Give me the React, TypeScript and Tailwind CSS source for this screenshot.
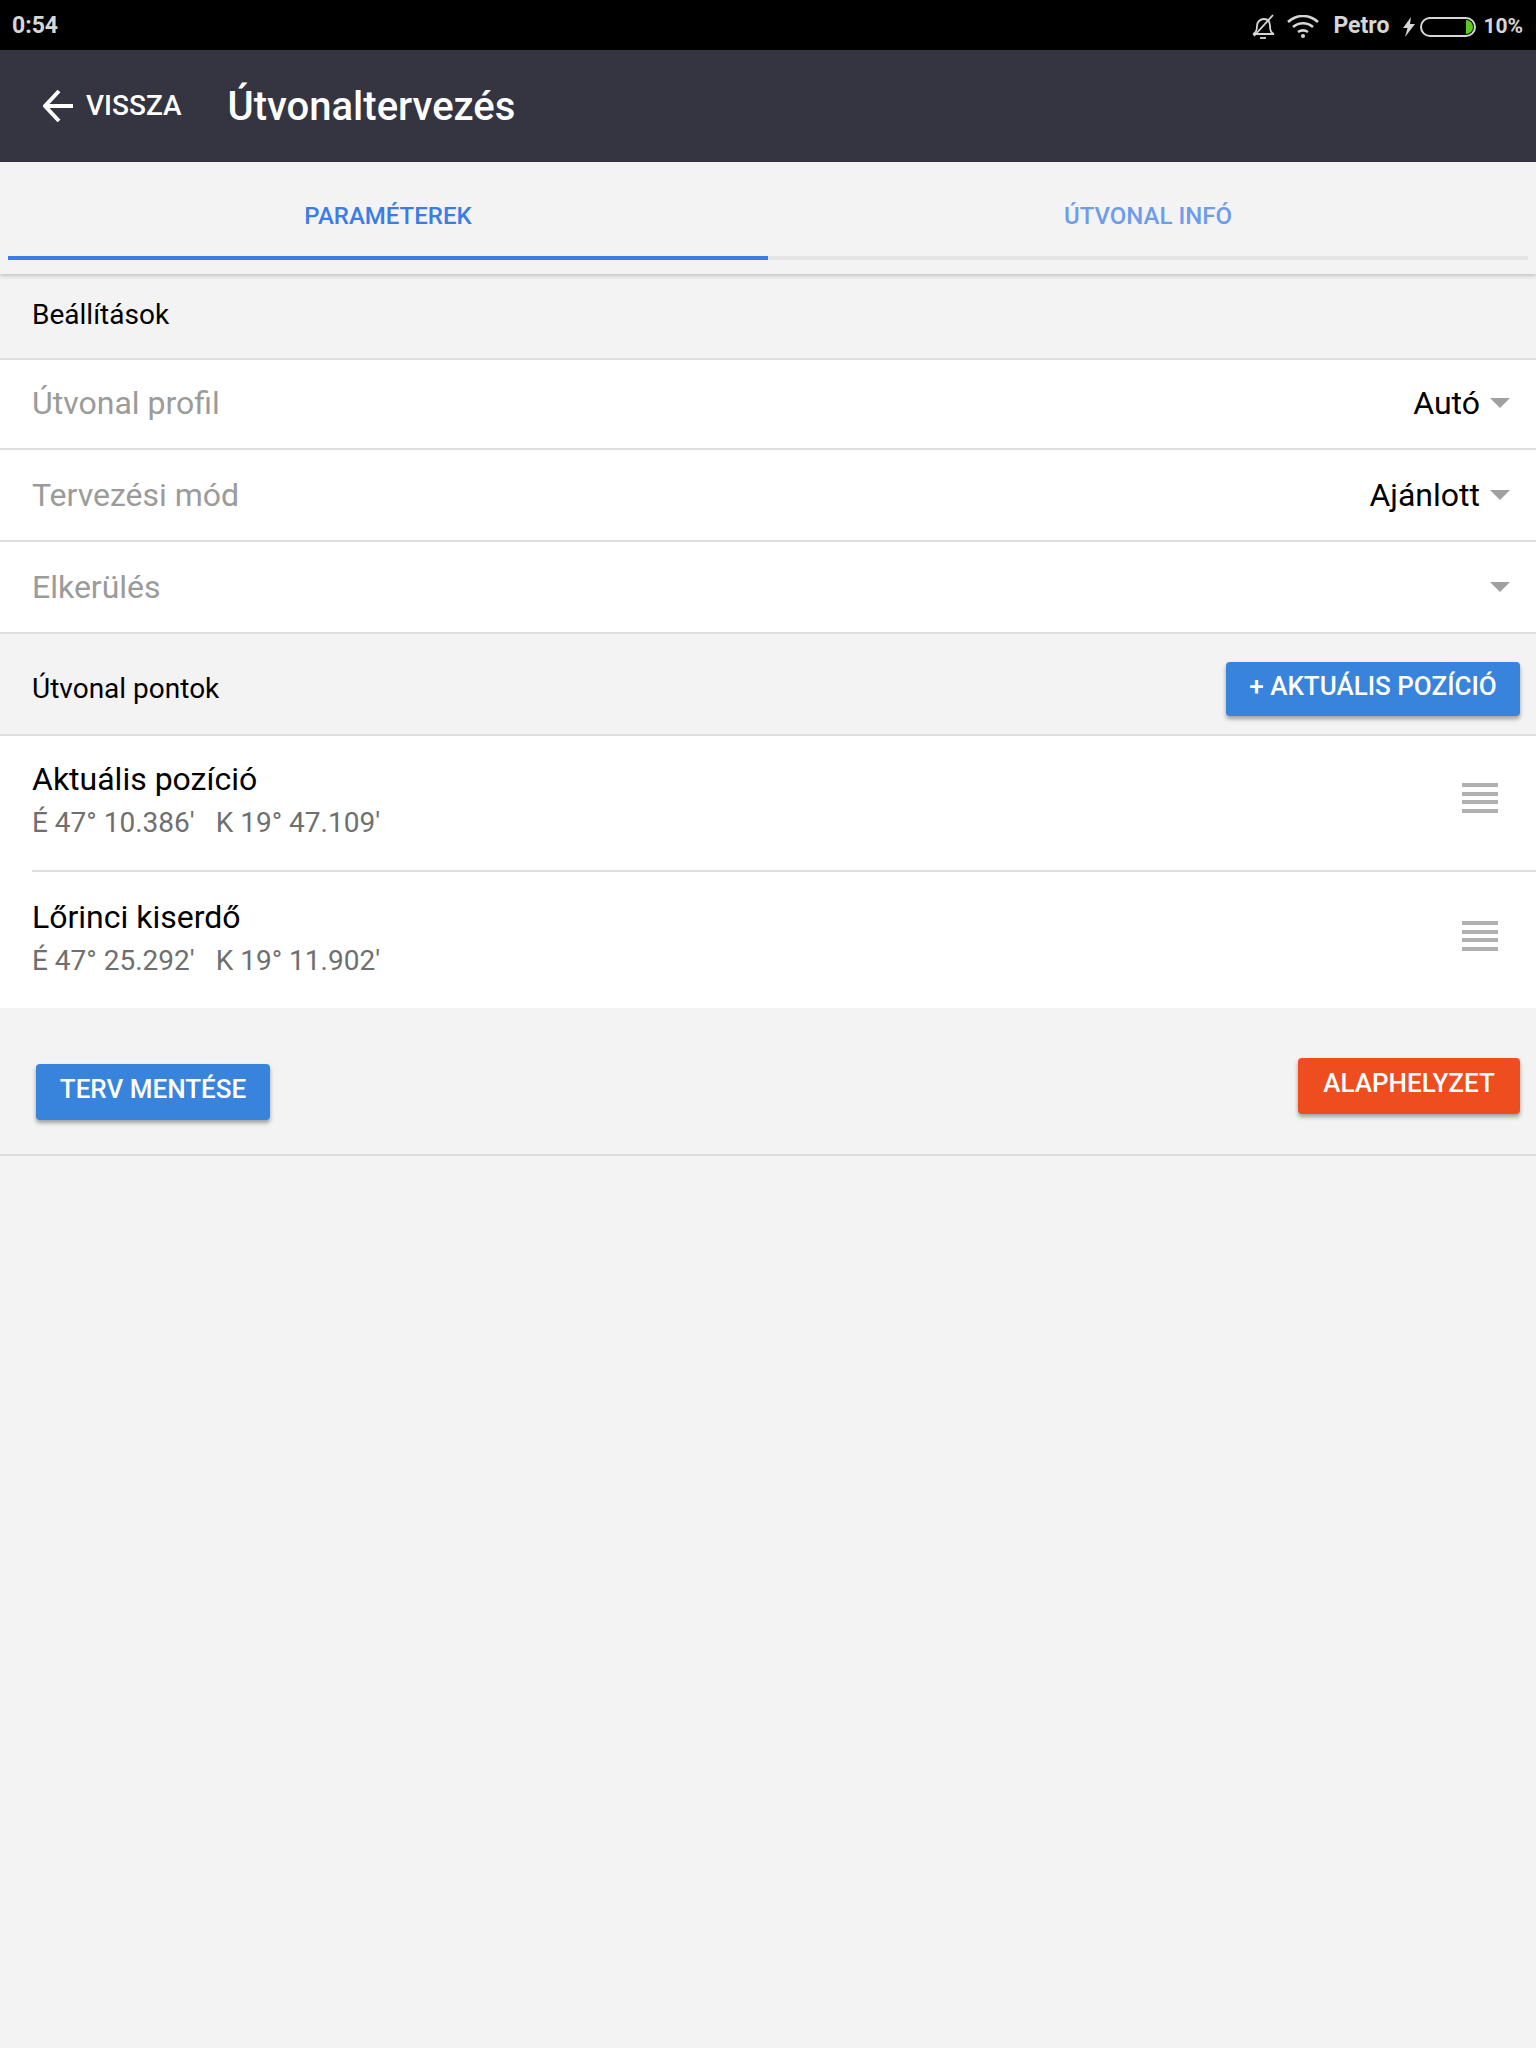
import React from "react";

const SelectRow = ({ label, value, height, lift }: { label: string; value?: string; height: string; lift?: boolean }) => (
  <div className={`flex ${height} items-center justify-between border-b-2 border-[#dedede] bg-white pl-8 pr-[26px] ${lift ? "pb-[2px]" : ""}`}>
    <span className="text-[32px] text-[#9b9b9b]">{label}</span>
    <div className="flex items-center">
      {value && <span className="text-[32px] text-black">{value}</span>}
      <div className="ml-[10px] h-0 w-0 border-x-[10px] border-t-[10px] border-x-transparent border-t-[#a0a0a0]"></div>
    </div>
  </div>
);

const PointRow = ({ name, coords }: { name: string; coords: string[] }) => (
  <div className="flex h-[134px] items-start justify-between pr-[38px] pt-[23px]">
    <div className="flex flex-col">
      <span className="text-[32px] leading-[40px] text-black">{name}</span>
      <div className="mt-[4px] flex gap-[21px] text-[28px] leading-[40px] text-[#6f6f6f]">
        <span>{coords[0]}</span>
        <span>{coords[1]}</span>
      </div>
    </div>
    <div className="mt-[24px] flex w-9 flex-col gap-[4.5px]">
      <div className="h-[4px] bg-[#b0b0b0]"></div>
      <div className="h-[4px] bg-[#b0b0b0]"></div>
      <div className="h-[4px] bg-[#b0b0b0]"></div>
      <div className="h-[4px] bg-[#b0b0b0]"></div>
    </div>
  </div>
);

export default function App() {
  return (
    <div className="flex h-[2048px] w-[1536px] flex-col overflow-hidden bg-[#f3f3f4] font-['Roboto',sans-serif]">
      {/* status bar */}
      <div className="flex h-[50px] items-center justify-between bg-black pl-3 pr-[13px] pt-[3px] text-[23px] font-bold text-[#d6d6d6]">
        <span>0:54</span>
        <div className="flex items-center">
          <svg width="23" height="25" viewBox="0 0 23 25" fill="none" stroke="#d6d6d6" strokeWidth="1.8">
            <path d="M1 20c3-1 4-4 4-8 0-4 3-7 7-7s6 3 6 7c0 4 1 7 4 8z" />
            <path d="M8 24h6" />
            <path d="M2 22L21 1" />
          </svg>
          <svg className="ml-[12px]" width="32" height="23" viewBox="0 0 32 23" fill="none" stroke="#d6d6d6" strokeWidth="2.6">
            <path d="M1 7c9-8 21-8 30 0" />
            <path d="M6 12c6-5 14-5 20 0" />
            <path d="M11 17c3-2 7-2 10 0" />
            <circle cx="16" cy="21" r="2" fill="#d6d6d6" stroke="none" />
          </svg>
          <span className="ml-[14px]">Petro</span>
          <svg className="ml-[14px]" width="12" height="20" viewBox="0 0 12 20" fill="#d6d6d6">
            <path d="M8 0L0 11h4.5L2 20l10-13H7z" />
          </svg>
          <div className="ml-[5px] flex h-[20px] w-[56px] items-center justify-end rounded-[10px] border-2 border-[#d6d6d6] pr-[1px]">
            <div className="h-[14px] w-[7px] rounded-r-[7px] bg-[#5fc81e]"></div>
          </div>
          <span className="ml-[7px] text-[21px]">10%</span>
        </div>
      </div>

      {/* header */}
      <div className="flex h-[112px] items-center bg-[#353542] pl-[43px] text-white">
        <svg width="30" height="34" viewBox="0 0 30 34" fill="none" stroke="white" strokeWidth="4">
          <path d="M16 2L2 17l14 15" />
          <path d="M2 17h28" />
        </svg>
        <span className="ml-[13px] text-[28px] font-medium">VISSZA</span>
        <span className="ml-[46px] pt-[2px] text-[40px] font-medium">Útvonaltervezés</span>
      </div>

      {/* tabs */}
      <div className="z-10 flex h-[112px] bg-[#f3f3f4] px-[8px] shadow-[0_2px_4px_rgba(0,0,0,0.2)]">
        <div className="flex h-[98px] flex-1 items-center justify-center border-b-4 border-[#3b7de4] pt-[14px] text-[24px] font-medium text-[#3b7de4]">
          PARAMÉTEREK
        </div>
        <div className="flex h-[98px] flex-1 items-center justify-center border-b-4 border-[#e4e4e4] pt-[14px] text-[24px] font-medium text-[#6d9ceb]">
          ÚTVONAL INFÓ
        </div>
      </div>

      {/* settings */}
      <div className="flex h-[86px] items-center border-b-2 border-[#dedede] pb-[2px] pl-8 text-[28px] text-black">
        Beállítások
      </div>
      <SelectRow label="Útvonal profil" value="Autó" height="h-[90px]" lift />
      <SelectRow label="Tervezési mód" value="Ajánlott" height="h-[92px]" />
      <SelectRow label="Elkerülés" height="h-[92px]" />

      {/* points */}
      <div className="flex h-[102px] items-start justify-between border-b-2 border-[#dedede] pl-8 pr-4 pt-[28px]">
        <span className="mt-[6px] text-[28px] text-black">Útvonal pontok</span>
        <button className="flex h-[54px] w-[294px] items-start justify-center rounded-[4px] bg-[#3884dd] pt-[5px] text-[26px] font-medium text-white shadow-[0_3px_4px_rgba(0,0,0,0.35)]">
          + AKTUÁLIS POZÍCIÓ
        </button>
      </div>
      <div className="bg-white pl-8">
        <div className="border-b-2 border-[#dedede]">
          <PointRow name="Aktuális pozíció" coords={["É 47° 10.386'", "K 19° 47.109'"]} />
        </div>
        <div className="pt-[2px]">
          <PointRow name="Lőrinci kiserdő" coords={["É 47° 25.292'", "K 19° 11.902'"]} />
        </div>
      </div>

      {/* actions */}
      <div className="flex h-[148px] items-start justify-between border-b-2 border-[#dedede] pl-9 pr-4 pt-[50px]">
        <button className="mt-[6px] flex h-[56px] w-[234px] items-start justify-center rounded-[4px] bg-[#3884dd] pt-[6px] text-[26px] font-medium text-white shadow-[0_3px_4px_rgba(0,0,0,0.35)]">
          TERV MENTÉSE
        </button>
        <button className="flex h-[56px] w-[222px] items-start justify-center rounded-[4px] bg-[#ee4d20] pt-[6px] text-[26px] font-medium text-white shadow-[0_3px_4px_rgba(0,0,0,0.35)]">
          ALAPHELYZET
        </button>
      </div>
    </div>
  );
}
